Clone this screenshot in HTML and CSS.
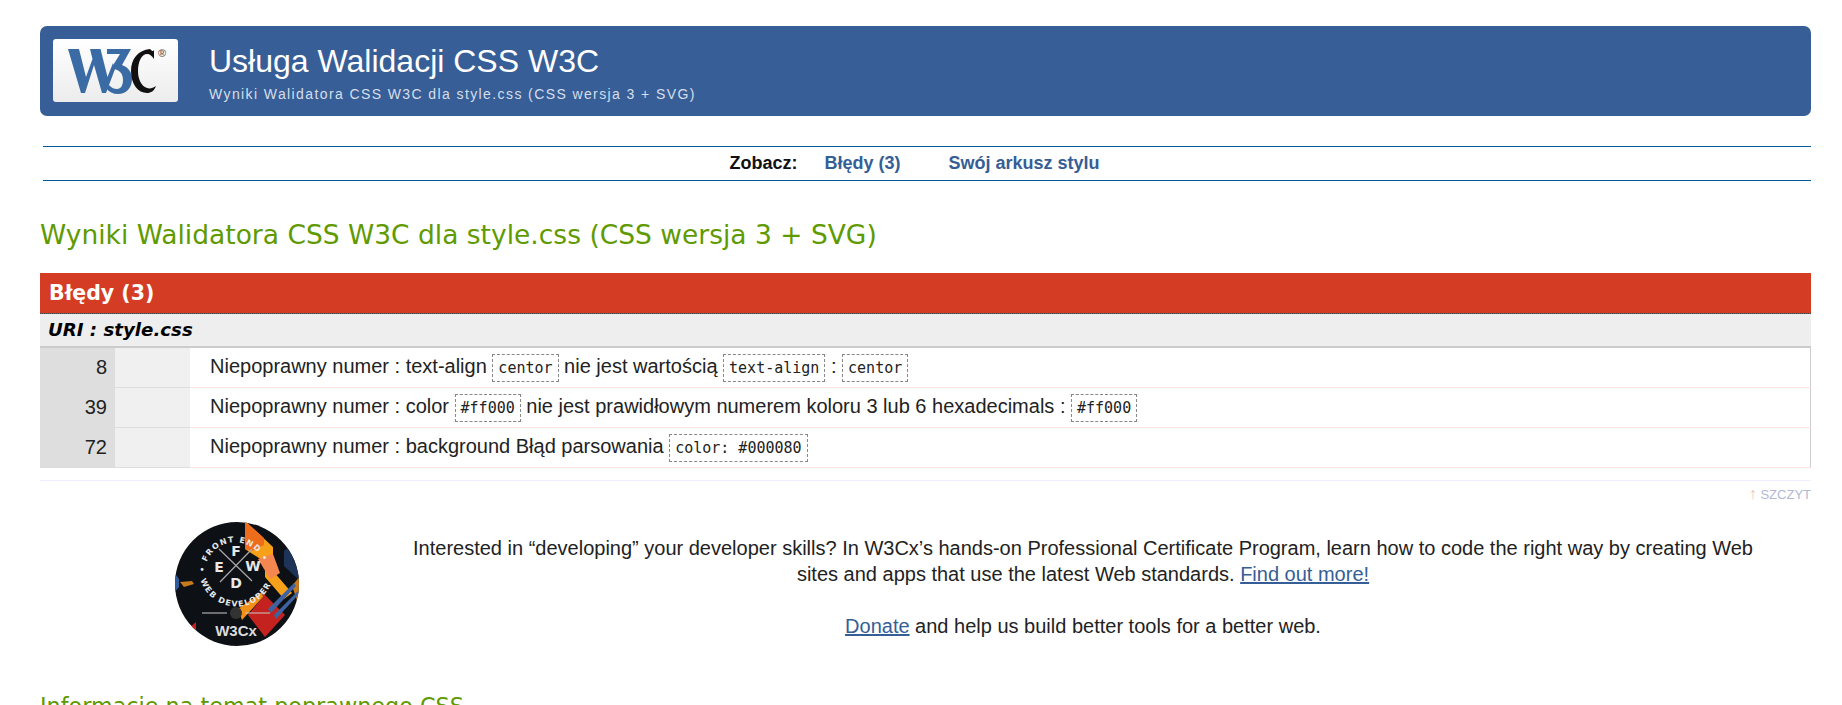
FILE: index.html
```html
<!DOCTYPE html>
<html lang="pl">
<head>
  <meta charset="UTF-8" />
  <title>Wyniki Walidatora CSS W3C</title>
  <link rel="stylesheet" href="styles.css">
</head>
<body>
  <div class="banner">
    <a class="logo" href="#">
      <svg width="125" height="63" viewBox="0 0 125 63">
        <defs>
          <linearGradient id="logoBg" x1="0" y1="0" x2="0" y2="1">
            <stop offset="0" stop-color="#ffffff"/>
            <stop offset="1" stop-color="#ececec"/>
          </linearGradient>
        </defs>
        <rect width="125" height="63" rx="3" fill="url(#logoBg)"/>
        <path d="M15 10H26L33 38L39.5 20L37 10H47.5L54.5 38L60 24L62 30L53 54H49L41 26L32 54H28Z" fill="#3a6ba5"/>
        <path d="M54 10H78L69 26C75 28 79 33 79 40C79 49 73 55 65 55C60 55 56 53 53 49L56 46C59 49 61 50 64 50C68 50 70 46 70 41C70 34 66 30 59 30V28L67 15H54Z" fill="#3a6ba5"/>
        <path d="M97 10C85 11 78 20 78 32C78 45 85 54 94 54C98 54 101 52 103 47C100 49 97 50 94 49C88 47 85 40 85 32C85 22 89 15 94 15C97 15 99 17 101 20L101 11C100 13 99 12 97 10Z" fill="#111"/>
        <text class="logo-reg" x="105" y="18">®</text>
      </svg>
    </a>
    <div class="banner-text">
      <h1>Usługa Walidacji CSS W3C</h1>
      <p>Wyniki Walidatora CSS W3C dla style.css (CSS wersja 3 + SVG)</p>
    </div>
  </div>

  <div class="nav">
    <strong>Zobacz:</strong>
    <a href="#">Błędy (3)</a>
    <a href="#">Swój arkusz stylu</a>
  </div>

  <h2 class="results-title">Wyniki Walidatora CSS W3C dla style.css (CSS wersja 3 + SVG)</h2>

  <div class="errors">
    <h3>Błędy (3)</h3>
    <h4>URI : style.css</h4>
    <table>
      <tr>
        <td class="linenum">8</td>
        <td class="codeContext"></td>
        <td class="parse-error">Niepoprawny numer : text-align <code>centor</code> nie jest wartością <code>text-align</code> : <code>centor</code></td>
      </tr>
      <tr>
        <td class="linenum">39</td>
        <td class="codeContext"></td>
        <td class="parse-error">Niepoprawny numer : color <code>#ff000</code> nie jest prawidłowym numerem koloru 3 lub 6 hexadecimals : <code>#ff000</code></td>
      </tr>
      <tr>
        <td class="linenum">72</td>
        <td class="codeContext"></td>
        <td class="parse-error">Niepoprawny numer : background Błąd parsowania <code>color: #000080</code></td>
      </tr>
    </table>
  </div>

  <div class="top-link"><a href="#"><span class="arrow">↑</span> SZCZYT</a></div>

  <div class="promo">
    <div class="promo-badge">
      <svg width="126" height="126" viewBox="0 0 126 126">
        <defs>
          <clipPath id="badgeClip"><circle cx="63" cy="63" r="62"/></clipPath>
          <path id="ringTop" d="M33 62a30 30 0 1 1 58-10"/>
          <path id="ringBottom" d="M25 46a37.500 37.500 0 0 0 75 4"/>
        </defs>
        <g clip-path="url(#badgeClip)">
          <rect width="126" height="126" fill="#0d1116"/>
          <polygon points="71,0 99,26 99,50 118,72 110,78 91,56 91,41 71,28" fill="#f7a11a"/>
          <polygon points="71,0 90,17 90,24 78,30 71,28" fill="#ee6d1d"/>
          <polygon points="84,38 99,33 106,52 96,58" fill="#f3874f"/>
          <polygon points="88,71 111,94 91,116 74,94 89,76" fill="#c4221f"/>
          <polygon points="64,88 88,71 89,76 68,99" fill="#f28f16"/>
          <polygon points="126,18 110,30 110,45 126,60" fill="#1e3358"/>
          <polygon points="126,55 118,65 124,82 126,80" fill="#c8791e"/>
          <polygon points="94,88 120,62 122,65 97,92" fill="#3d63a0"/>
          <polygon points="100,94 124,70 126,72 102,98" fill="#3d63a0"/>
          <polygon points="0,51 5,58 5,66 0,72" fill="#2f5c9c"/>
          <polygon points="6,61 18,60 20,63 10,66" fill="#c87a1e"/>
          <polygon points="14,108 22,101 22,116" fill="#c4221f"/>
          <line x1="45" y1="28" x2="78" y2="60" stroke="#aaa" stroke-width="1.2"/>
          <line x1="78" y1="28" x2="46" y2="61" stroke="#aaa" stroke-width="1.2"/>
          <line x1="28" y1="92" x2="53" y2="92" stroke="#c9c9c9" stroke-width="1.2"/>
          <line x1="71" y1="92" x2="96" y2="92" stroke="#c9c9c9" stroke-width="1.2"/>
          <circle cx="62" cy="92" r="6" fill="#333"/>
          <text class="badge-ring"><textPath href="#ringTop" startOffset="50%" text-anchor="middle">• FRONT END •</textPath></text>
          <text class="badge-ring"><textPath href="#ringBottom" startOffset="50%" text-anchor="middle">WEB DEVELOPER</textPath></text>
          <text class="badge-letter" x="62" y="35">F</text>
          <text class="badge-letter" x="45" y="51">E</text>
          <text class="badge-letter" x="79" y="50">W</text>
          <text class="badge-letter" x="62" y="67">D</text>
          <text class="badge-w3cx" x="62" y="115">W3Cx</text>
        </g>
      </svg>
    </div>
    <div class="promo-text">
      <p>Interested in “developing” your developer skills? In W3Cx’s hands-on Professional Certificate Program, learn how to code the right way by creating Web sites and apps that use the latest Web standards. <a href="#">Find out more!</a></p>
      <p><a href="#">Donate</a> and help us build better tools for a better web.</p>
    </div>
  </div>

  <h2 class="info-title">Informacje na temat poprawnego CSS</h2>
</body>
</html>
```

FILE: styles.css
```css
html {
  overflow: hidden;
}
body {
  margin: 0;
  padding: 26px 31px 0 40px;
  font-family: "Liberation Sans", Arial, sans-serif;
  font-size: 20px;
  color: #222;
  background: #fff;
  height: 705px;
  box-sizing: border-box;
  overflow: hidden;
}
a {
  color: #355e96;
}

.banner {
  display: flex;
  align-items: center;
  gap: 31px;
  height: 90px;
  padding-left: 13px;
  background: #375e97;
  border-radius: 7px;
  color: #fff;
}
.logo {
  display: block;
  height: 63px;
  margin-top: -2px;
}
.logo-reg {
  font-family: "Liberation Sans", sans-serif;
  font-size: 11px;
  font-weight: bold;
  fill: #666;
}
.banner-text {
  margin-top: 3px;
}
.banner-text h1 {
  margin: 0;
  font-size: 32px;
  font-weight: normal;
  line-height: 36px;
}
.banner-text p {
  margin: 7px 0 0;
  font-size: 14px;
  letter-spacing: 1.4px;
  color: #d5deeb;
}

.nav {
  display: flex;
  justify-content: center;
  gap: 27px;
  margin: 30px 0 0 3px;
  padding-right: 4px;
  height: 33px;
  line-height: 33px;
  border-top: 1px solid #005a9c;
  border-bottom: 1px solid #005a9c;
  font-size: 18px;
}
.nav strong {
  color: #111;
}
.nav a {
  color: #355e96;
  font-weight: bold;
  text-decoration: none;
  margin-right: 21px;
}

.results-title, .info-title {
  margin: 0;
  font-family: "DejaVu Sans", Verdana, sans-serif;
  font-weight: normal;
  color: #5f9a00;
}
.results-title {
  font-size: 26.5px;
  line-height: 36px;
  margin-top: 36px;
}

.errors {
  margin-top: 20px;
  border-bottom: 1px solid #eef;
  padding-bottom: 12px;
}
.errors h3 {
  margin: 0;
  padding: 1px 0 0 9px;
  height: 39px;
  line-height: 39px;
  border-bottom: 1px dotted #444;
  font-family: "DejaVu Sans", Verdana, sans-serif;
  font-size: 20.5px;
  font-weight: bold;
  color: #fff;
  background: #d43d23;
}
.errors h4 {
  margin: 0;
  padding-left: 8px;
  height: 32px;
  line-height: 32px;
  font-family: "DejaVu Sans", Verdana, sans-serif;
  font-size: 18.2px;
  font-style: italic;
  font-weight: bold;
  color: #000;
  background: #eee;
}
.errors table {
  width: 100%;
  border-collapse: collapse;
  border-top: 2px solid #ccc;
  border-right: 1px solid #ccc;
}
.errors td {
  height: 39px;
  padding: 0;
  border-bottom: 1px solid #ddd;
}
.linenum {
  width: 75px;
  padding-right: 8px !important;
  box-sizing: border-box;
  text-align: right;
  background: #dedede;
}
.codeContext {
  width: 75px;
  background: #f0f0f0;
}
td.parse-error {
  padding-left: 20px;
  border-bottom-color: #fde0e0;
}
code {
  display: inline-block;
  padding: 3px 5px;
  border: 1px dashed #888;
  font-family: "DejaVu Sans Mono", "Liberation Mono", monospace;
  font-size: 15px;
  line-height: 20px;
}

.top-link {
  text-align: right;
  font-size: 13px;
  line-height: 14px;
  margin-top: 6px;
}
.top-link a {
  color: #b4b8d4;
  text-decoration: none;
}
.top-link .arrow {
  font-size: 16px;
  line-height: 14px;
  color: #e8c8b8;
}

.promo {
  display: flex;
  align-items: flex-start;
  margin-top: 19px;
}
.promo-badge {
  width: 373px;
  padding-left: 134px;
  box-sizing: border-box;
  flex: none;
}
.promo-text {
  width: 1340px;
  padding-top: 14px;
  text-align: center;
  line-height: 26px;
}
.promo-text p {
  margin: 0 0 26px;
}

.info-title {
  font-size: 22.3px;
  line-height: 28px;
  margin-top: 27px;
}

.badge-ring {
  font-family: "DejaVu Sans", sans-serif;
  font-size: 8px;
  font-weight: bold;
  letter-spacing: 1.2px;
  fill: #e8e8e8;
}
.badge-letter {
  font-family: "DejaVu Sans", sans-serif;
  font-size: 14px;
  font-weight: bold;
  text-anchor: middle;
  fill: #e8e8e8;
}
.badge-w3cx {
  font-family: "Liberation Sans", sans-serif;
  font-size: 15px;
  font-weight: bold;
  text-anchor: middle;
  fill: #ddd;
}
```
